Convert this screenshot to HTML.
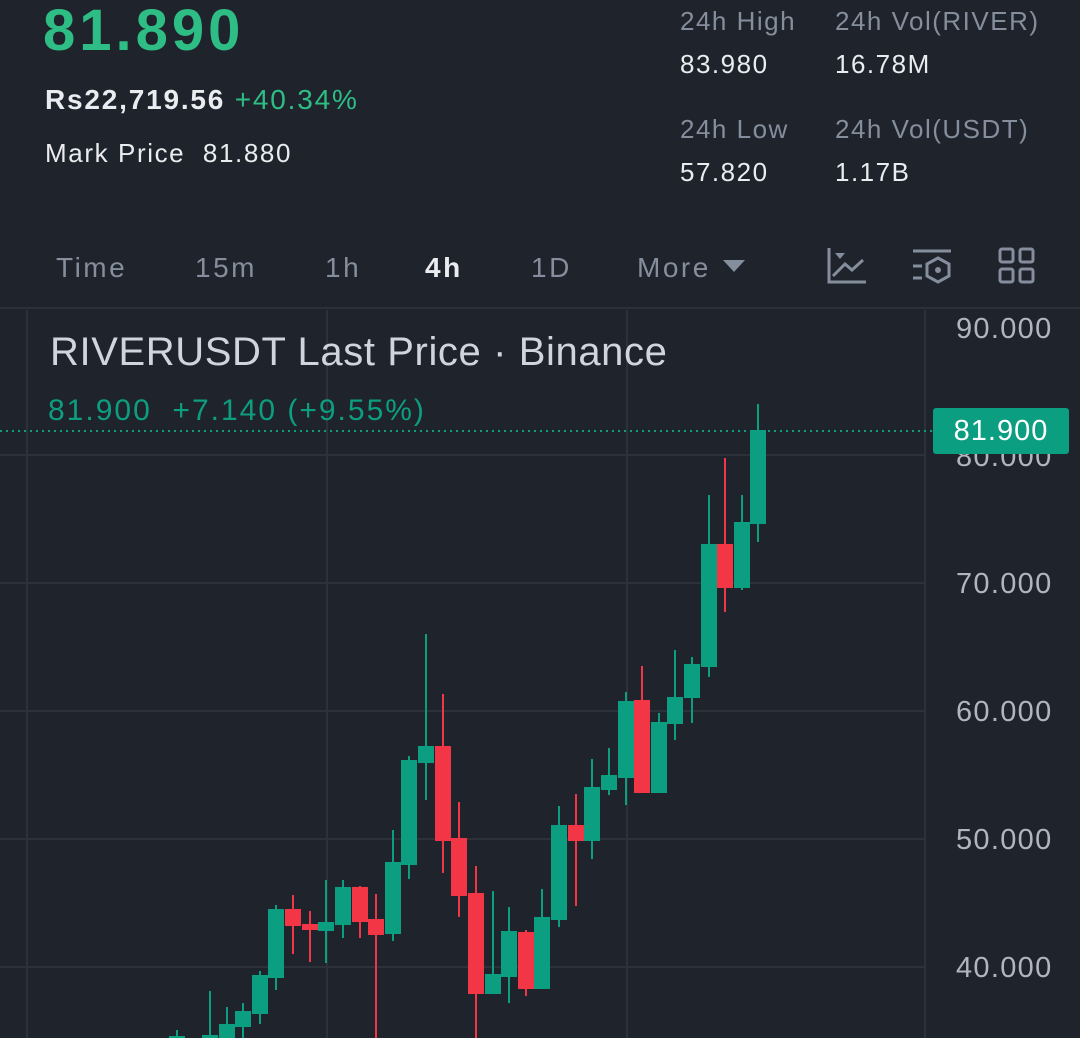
<!DOCTYPE html>
<html><head><meta charset="utf-8"><style>
body{margin:0;width:1080px;height:1038px;background:#1f232b;overflow:hidden;font-family:"Liberation Sans",sans-serif;position:relative;color:#eaecef}
.a{position:absolute;white-space:nowrap}
.g{color:#2ebd85}.m{color:#848e9c}
.s{font-size:26px;letter-spacing:1.5px}
.t{font-size:28px;letter-spacing:2.5px}
.y{font-size:29px;color:#b2b5be;letter-spacing:1.3px}
</style></head><body>
<div class="a g" style="left:43px;top:-3px;font-size:58px;font-weight:bold;letter-spacing:4px">81.890</div>
<div class="a" style="left:45px;top:84px;font-size:28px;font-weight:bold;letter-spacing:1.8px">Rs22,719.56 <span class="g" style="font-weight:normal">+40.34%</span></div>
<div class="a" style="left:45px;top:138px;font-size:26px;letter-spacing:1.6px">Mark Price&nbsp; 81.880</div>
<div class="a m s" style="left:680px;top:6px">24h High</div>
<div class="a s" style="left:680px;top:49px">83.980</div>
<div class="a m s" style="left:835px;top:6px">24h Vol(RIVER)</div>
<div class="a s" style="left:835px;top:49px">16.78M</div>
<div class="a m s" style="left:680px;top:114px">24h Low</div>
<div class="a s" style="left:680px;top:157px">57.820</div>
<div class="a m s" style="left:835px;top:114px">24h Vol(USDT)</div>
<div class="a s" style="left:835px;top:157px">1.17B</div>
<div class="a m t" style="left:56px;top:252px">Time</div>
<div class="a m t" style="left:195px;top:252px">15m</div>
<div class="a m t" style="left:325px;top:252px">1h</div>
<div class="a t" style="left:425px;top:252px;font-weight:bold">4h</div>
<div class="a m t" style="left:531px;top:252px">1D</div>
<div class="a m t" style="left:637px;top:252px">More</div>
<svg class="a" style="left:0;top:0" width="1080" height="1038">
<polygon points="723,260 745,260 734,272" fill="#848e9c"/>
<g stroke="#848e9c" stroke-width="3" fill="none">
<path d="M829,248V282H866"/><path d="M833,276L845,264L852,270L863,260"/>
<path d="M913,251H951M913,266H922M913,278H922M938,258L949,264V276L938,282L927,276V264Z"/>
<rect x="1000" y="249" width="13" height="13" rx="2"/><rect x="1020" y="249" width="13" height="13" rx="2"/><rect x="1000" y="269" width="13" height="13" rx="2"/><rect x="1020" y="269" width="13" height="13" rx="2"/>
</g>
<polygon points="835,253 845,253 840,259" fill="#848e9c"/>
<circle cx="938" cy="270" r="3" fill="#848e9c"/>
<line x1="0" y1="308" x2="1080" y2="308" stroke="#2b3039" stroke-width="2"/>
<g stroke="#2c313a" stroke-width="2">
<line x1="27" y1="310" x2="27" y2="1038"/><line x1="327" y1="310" x2="327" y2="1038"/><line x1="627" y1="310" x2="627" y2="1038"/><line x1="925" y1="310" x2="925" y2="1038"/>
<line x1="0" y1="455" x2="925" y2="455"/><line x1="0" y1="583" x2="925" y2="583"/><line x1="0" y1="711" x2="925" y2="711"/><line x1="0" y1="839" x2="925" y2="839"/><line x1="0" y1="967" x2="925" y2="967"/>
</g>
<line x1="0" y1="431" x2="933" y2="431" stroke="#0d9e80" stroke-width="2" stroke-dasharray="2,4"/>
<g stroke="#0b9e81" stroke-width="2" fill="#0b9e81">
<line x1="177" y1="1030" x2="177" y2="1038"/><rect x="170" y="1037" width="14" height="2"/>
<line x1="210" y1="991" x2="210" y2="1038"/><rect x="203" y="1036" width="14" height="3"/>
<line x1="227" y1="1007" x2="227" y2="1038"/><rect x="220" y="1025" width="14" height="12"/>
<line x1="243" y1="1003" x2="243" y2="1038"/><rect x="236" y="1012" width="14" height="14"/>
<line x1="260" y1="971" x2="260" y2="1024"/><rect x="253" y="976" width="14" height="37"/>
<line x1="276" y1="905" x2="276" y2="990"/><rect x="269" y="910" width="14" height="67"/>
<line x1="326" y1="880" x2="326" y2="963"/><rect x="319" y="923" width="14" height="7"/>
<line x1="343" y1="880" x2="343" y2="938"/><rect x="336" y="888" width="14" height="36"/>
<line x1="393" y1="830" x2="393" y2="941"/><rect x="386" y="863" width="14" height="70"/>
<line x1="409" y1="756" x2="409" y2="879"/><rect x="402" y="761" width="14" height="103"/>
<line x1="426" y1="634" x2="426" y2="800"/><rect x="419" y="747" width="14" height="15"/>
<line x1="493" y1="891" x2="493" y2="993"/><rect x="486" y="975" width="14" height="18"/>
<line x1="509" y1="907" x2="509" y2="1003"/><rect x="502" y="932" width="14" height="44"/>
<line x1="542" y1="889" x2="542" y2="988"/><rect x="535" y="918" width="14" height="70"/>
<line x1="559" y1="806" x2="559" y2="927"/><rect x="552" y="826" width="14" height="93"/>
<line x1="592" y1="759" x2="592" y2="859"/><rect x="585" y="788" width="14" height="52"/>
<line x1="609" y1="748" x2="609" y2="795"/><rect x="602" y="776" width="14" height="13"/>
<line x1="626" y1="692" x2="626" y2="805"/><rect x="619" y="702" width="14" height="75"/>
<line x1="659" y1="713" x2="659" y2="792"/><rect x="652" y="723" width="14" height="69"/>
<line x1="675" y1="650" x2="675" y2="740"/><rect x="668" y="698" width="14" height="25"/>
<line x1="692" y1="657" x2="692" y2="723"/><rect x="685" y="665" width="14" height="32"/>
<line x1="709" y1="495" x2="709" y2="677"/><rect x="702" y="545" width="14" height="121"/>
<line x1="742" y1="495" x2="742" y2="590"/><rect x="735" y="523" width="14" height="64"/>
<line x1="758" y1="404" x2="758" y2="542"/><rect x="751" y="431" width="14" height="92"/>
</g>
<g stroke="#f23645" stroke-width="2" fill="#f23645">
<line x1="293" y1="895" x2="293" y2="954"/><rect x="286" y="910" width="14" height="15"/>
<line x1="310" y1="911" x2="310" y2="962"/><rect x="303" y="925" width="14" height="4"/>
<line x1="360" y1="886" x2="360" y2="938"/><rect x="353" y="888" width="14" height="33"/>
<line x1="376" y1="894" x2="376" y2="1038"/><rect x="369" y="920" width="14" height="14"/>
<line x1="443" y1="694" x2="443" y2="873"/><rect x="436" y="747" width="14" height="93"/>
<line x1="459" y1="802" x2="459" y2="917"/><rect x="452" y="839" width="14" height="56"/>
<line x1="476" y1="866" x2="476" y2="1038"/><rect x="469" y="894" width="14" height="99"/>
<line x1="526" y1="930" x2="526" y2="996"/><rect x="519" y="933" width="14" height="55"/>
<line x1="576" y1="794" x2="576" y2="906"/><rect x="569" y="826" width="14" height="14"/>
<line x1="642" y1="666" x2="642" y2="793"/><rect x="635" y="701" width="14" height="91"/>
<line x1="725" y1="458" x2="725" y2="612"/><rect x="718" y="545" width="14" height="42"/>
</g>
</svg>
<div class="a" style="left:50px;top:330px;font-size:40px;color:#d1d4dc;letter-spacing:0.6px">RIVERUSDT Last Price · Binance</div>
<div class="a" style="left:48px;top:394px;font-size:30px;color:#0d9e80;letter-spacing:2px">81.900&nbsp; +7.140 (+9.55%)</div>
<div class="a y" style="left:956px;top:313px">90.000</div>
<div class="a y" style="left:956px;top:441px">80.000</div>
<div class="a y" style="left:956px;top:568px">70.000</div>
<div class="a y" style="left:956px;top:696px">60.000</div>
<div class="a y" style="left:956px;top:824px">50.000</div>
<div class="a y" style="left:956px;top:952px">40.000</div>
<div class="a" style="left:933px;top:408px;width:136px;height:46px;line-height:46px;text-align:center;font-size:29px;color:#fff;background:#0b9e81;border-radius:3px;letter-spacing:1px">81.900</div>
</body></html>
